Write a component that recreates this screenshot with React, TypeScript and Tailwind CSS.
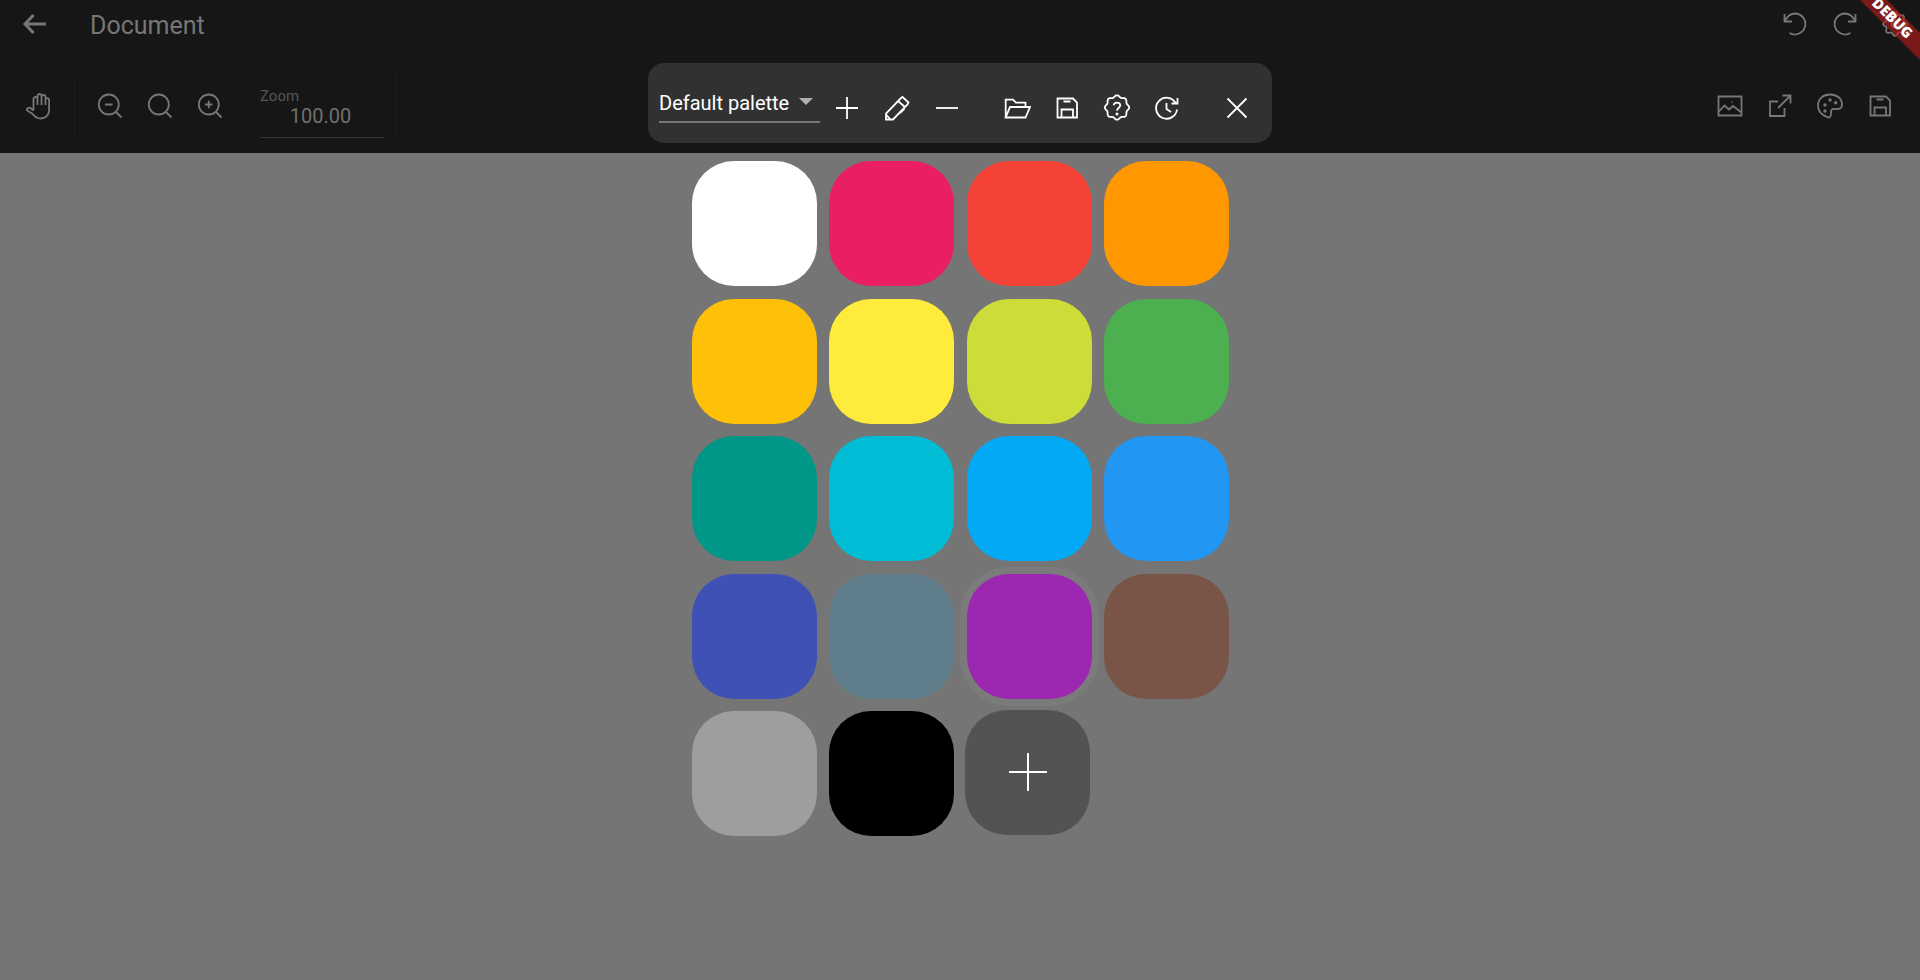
import React from "react";

const swatches = [
  "#ffffff", "#e91e63", "#f44336", "#ff9800",
  "#ffc107", "#ffeb3b", "#cddc39", "#4caf50",
  "#009688", "#00bcd4", "#03a9f4", "#2196f3",
  "#3f51b5", "#607d8b", "#9c27b0", "#795548",
  "#9e9e9e", "#000000",
];

// scalloped outline for the badge and settings icons
const scallop = (cx: number, cy: number, r: number, amp: number, lobes: number) => {
  const pts: string[] = [];
  for (let i = 0; i < 96; i++) {
    const t = (i / 96) * Math.PI * 2;
    const rad = r + amp * Math.cos(lobes * t);
    pts.push(`${(cx + rad * Math.sin(t)).toFixed(2)} ${(cy - rad * Math.cos(t)).toFixed(2)}`);
  }
  return `M${pts.join("L")}Z`;
};

const icons: Record<string, React.ReactNode> = {
  back: <path strokeWidth={3} d="M12.5 5L4 14L12.5 23M4 14H25" />,
  hand: (
    <path d="M8.5 18V7a2 2 0 0 1 4 0V13M12.5 7V4a2 2 0 0 1 4 0V13M16.5 5a2 2 0 0 1 4 0V13M20.5 8a1.8 1.8 0 0 1 3.6 0V18c0 5-3.5 8.5-8.5 8.5c-4 0-6-2-8-4.5L2.2 18.5c-1-2 2-4 4-2L8.5 18.5" />
  ),
  zoomOut: (
    <>
      <circle cx="12.8" cy="12.5" r="10" />
      <path d="M20 20L25.5 25.5M9 12.5H16.5" />
    </>
  ),
  zoomFit: (
    <>
      <circle cx="12.8" cy="12.5" r="10" />
      <path d="M20 20L25.5 25.5" />
    </>
  ),
  zoomIn: (
    <>
      <circle cx="12.8" cy="12.5" r="10" />
      <path d="M20 20L25.5 25.5M9 12.5H16.5M12.8 8.8V16.2" />
    </>
  ),
  plus: <path d="M3 14H25M14 3V25" />,
  minus: <path d="M3 14H25" />,
  pencil: (
    <path d="M3 25.5V19.5L17.5 4.5L19.5 3L25.5 8.5L24.5 10.5L10 25.5ZM15 7L22.5 13.5M3 20.5L7.5 25.5M17 19L21.5 14.5" />
  ),
  folder: <path d="M2.7 23.5V5.7H10L13 8.7H22.5V13M2.7 23.5H22.5L27 13H7L2.7 23.5Z" />,
  save: (
    <path d="M4.5 4.5H20L24 8.5V23.5H4.5ZM10.5 7.5H17.5M8.5 23.5V15.5H20V23.5" />
  ),
  help: (
    <>
      <path d={scallop(14, 13.5, 11.3, 0.9, 8)} />
      <path d="M10.7 11.3C10.7 7.6 17.3 7.6 17.3 11.3C17.3 13.8 14 13.8 14 16.8" />
      <circle cx="14" cy="20" r="0.6" fill="currentColor" />
    </>
  ),
  history: (
    <path d="M22.7 9A10.5 10.5 0 1 0 24 15.5M24.5 4V9.5H18.5M13.5 9V15L18 18" />
  ),
  close: <path d="M4.5 4.5L23.5 23.5M23.5 4.5L4.5 23.5" />,
  image: (
    <path d="M2.5 4.5H25.5V23.5H2.5ZM2.5 20L8.5 13.5L13 17.5L17 14L25.5 20.5M16 9.5V10.5" />
  ),
  share: <path d="M12 9.5H4V24H18.5V16M12 16L24.5 3.5M16.5 3.5H24.5V11.5" />,
  palette: (
    <>
      <path d="M14 2.5C21 2.5 26 6.5 26 12.5C26 17 22 17.5 19 17C16 16.5 14.5 18 15 21C15.5 24 13.5 26.2 11.5 25.2C5.5 23 2 19 2 13.5C2 7 7 2.5 14 2.5Z" />
      <circle cx="9" cy="13" r="0.8" fill="currentColor" />
      <circle cx="14" cy="8" r="0.8" fill="currentColor" />
      <circle cx="19.7" cy="10.7" r="0.8" fill="currentColor" />
      <circle cx="9" cy="19" r="0.8" fill="currentColor" />
    </>
  ),
  undo: <path d="M3.5 4V11.5H11M4 11.5C6 6 10 3.5 14.5 3.5A10.5 10.5 0 1 1 8.5 23" />,
  redo: <path d="M24.5 4V11.5H17M24 11.5C22 6 18 3.5 13.5 3.5A10.5 10.5 0 1 0 19.5 23" />,
  settings: (
    <>
      <path d={scallop(14, 14, 10.5, 1.3, 8)} />
      <circle cx="14" cy="14" r="3.5" />
    </>
  ),
};

const Icon = ({ name, className }: { name: string; className?: string }) => (
  <svg
    width={28}
    height={28}
    viewBox="0 0 28 28"
    fill="none"
    stroke="currentColor"
    strokeWidth={1.8}
    className={className}
  >
    {icons[name]}
  </svg>
);

const IconButton = ({ name }: { name: string }) => (
  <button className="flex h-[50px] w-[50px] shrink-0 items-center justify-center">
    <Icon name={name} />
  </button>
);

const PalettePanel = () => (
  <div className="absolute left-[648px] top-[63px] flex h-[80px] w-[624px] rounded-[16px] bg-[#313131] pl-[11px] pt-[20px] text-white">
    {/* パレット選択 */}
    <div className="mt-[-3px] flex h-[43px] w-[161px] items-center justify-between border-b-2 border-[#777777] pr-[7px] pt-[5px]">
      <span className="text-[20px] leading-[24px]">Default palette</span>
      <span className="mb-[3px] h-0 w-0 border-x-[7px] border-t-[7px] border-x-transparent border-t-[#b0b0b0]" />
    </div>
    <div className="ml-[2px] flex">
      <IconButton name="plus" />
      <IconButton name="pencil" />
      <IconButton name="minus" />
    </div>
    <div className="ml-[20px] flex">
      <IconButton name="folder" />
      <IconButton name="save" />
      <IconButton name="help" />
      <IconButton name="history" />
    </div>
    <div className="ml-[20px]">
      <IconButton name="close" />
    </div>
  </div>
);

const Header = () => (
  <header className="h-[153px] shrink-0 bg-[#161616] text-[#777777]">
    <div className="flex h-[48px] items-center pl-[10px]">
      <IconButton name="back" />
      <span className="ml-[30px] mt-[3px] text-[25px] leading-[28px]">Document</span>
      <div className="ml-auto flex">
        <IconButton name="undo" />
        <IconButton name="redo" />
        <IconButton name="settings" />
      </div>
    </div>
    <div className="flex h-[105px] items-center pl-[14px] pr-[15px] pt-[10px]">
      <IconButton name="hand" />
      <div className="ml-[10px] h-[63px] w-px bg-[#1c1c1c]" />
      <div className="ml-[10px] flex">
        <IconButton name="zoomOut" />
        <IconButton name="zoomFit" />
        <IconButton name="zoomIn" />
      </div>
      <div className="ml-[25px] mt-[13px] flex h-[51px] w-[125px] flex-col border-b border-[#333333]">
        <span className="text-[15px] leading-[18px] text-[#555555]">Zoom</span>
        <span className="mt-[-1px] pr-[4px] text-center text-[20px] leading-[24px] text-[#707070]">100.00</span>
      </div>
      <div className="ml-[10px] h-[63px] w-px bg-[#1c1c1c]" />
      <div className="ml-auto flex">
        <IconButton name="image" />
        <IconButton name="share" />
        <IconButton name="palette" />
        <IconButton name="save" />
      </div>
    </div>
  </header>
);

export default function App() {
  return (
    <div className="relative flex h-screen w-full flex-col overflow-hidden bg-[#757575] font-['Roboto',sans-serif]">
      <Header />
      <PalettePanel />
      {/* カラーグリッド */}
      <main className="flex justify-center pl-[1px] pt-[8px]">
        <div className="grid grid-cols-[repeat(4,125px)] gap-[12.5px]">
          {swatches.map((color) => (
            <div
              key={color}
              className={
                color === "#9c27b0"
                  ? "h-[125px] rounded-[42px] shadow-[0_0_0_7px_#7b7b7b]"
                  : "h-[125px] rounded-[42px]"
              }
              style={{ backgroundColor: color }}
            />
          ))}
          <button className="ml-[-2px] mt-[-1px] flex h-[125px] w-[125px] items-center justify-center rounded-[42px] bg-[#535353] pl-[1px] text-white">
            <svg width={40} height={40} viewBox="0 0 40 40" stroke="currentColor" strokeWidth={2}>
              <path d="M1 19H39M20 0V38" />
            </svg>
          </button>
        </div>
      </main>
      {/* debug banner */}
      <div className="absolute right-[-32px] top-[9px] flex h-[19px] w-[120px] rotate-45 items-center justify-center bg-[#b71c1c]/[0.63] font-['Open_Sans',sans-serif] text-[14.5px] font-extrabold leading-none text-white">
        <span>DEBUG</span>
      </div>
    </div>
  );
}
